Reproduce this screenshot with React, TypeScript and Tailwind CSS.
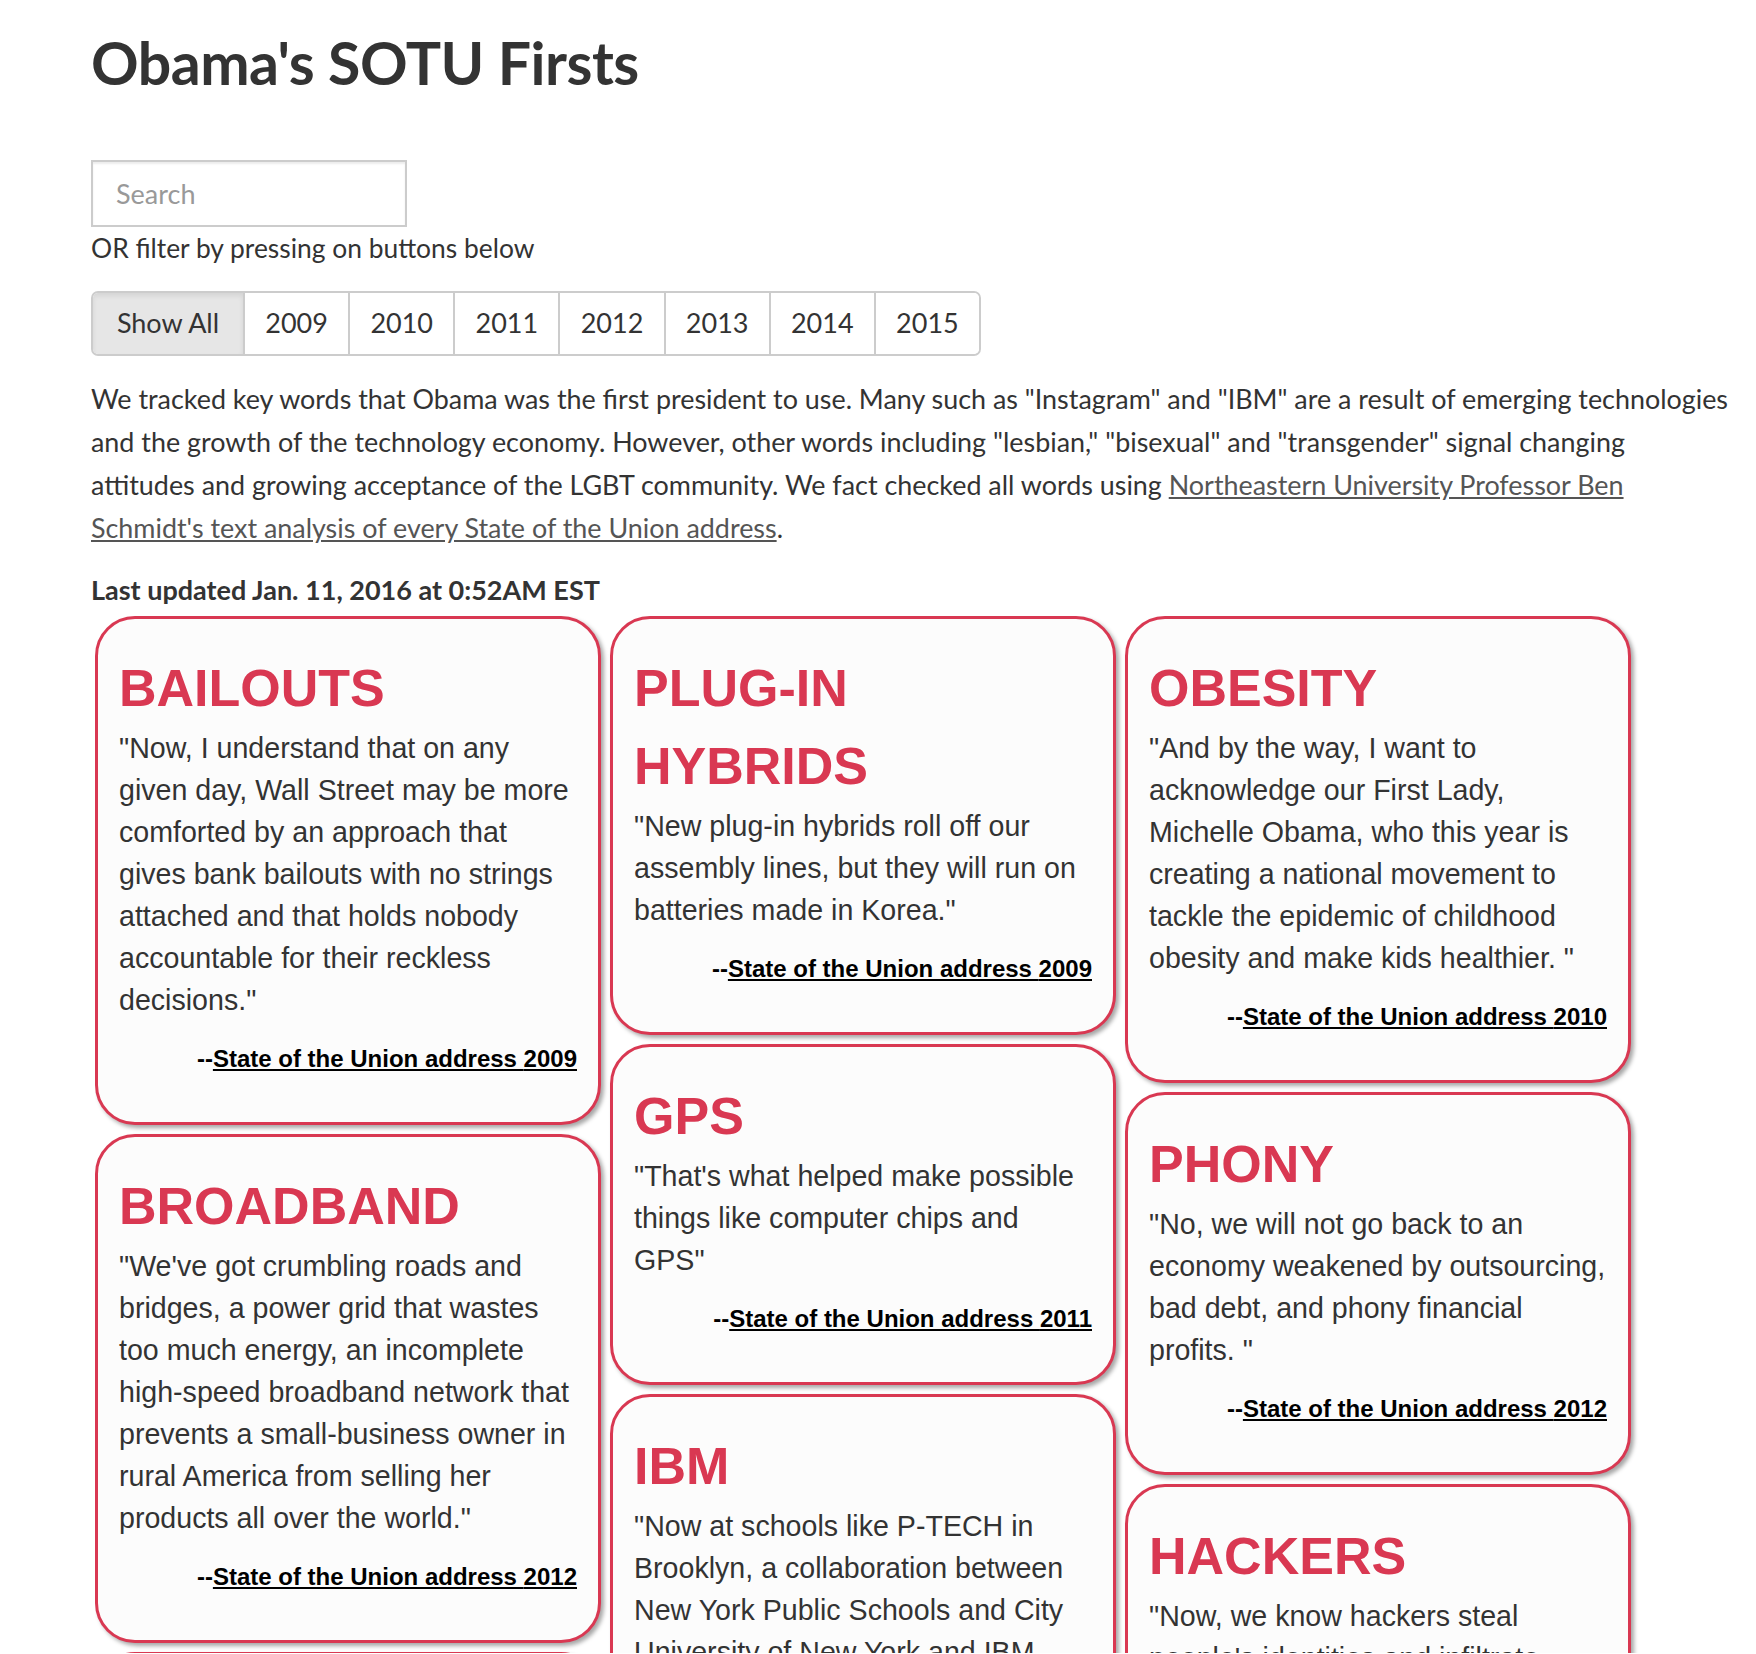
import React, { useState } from 'react';

interface First {
  word: string;
  quote: string;
  year: number;
}

const columns: First[][] = [
  [
    {
      word: 'BAILOUTS',
      quote:
        '"Now, I understand that on any given day, Wall Street may be more comforted by an approach that gives bank bailouts with no strings attached and that holds nobody accountable for their reckless decisions."',
      year: 2009,
    },
    {
      word: 'BROADBAND',
      quote:
        '"We\'ve got crumbling roads and bridges, a power grid that wastes too much energy, an incomplete high-speed broadband network that prevents a small-business owner in rural America from selling her products all over the world."',
      year: 2012,
    },
    {
      word: 'LESBIAN',
      quote:
        '"That\'s why we defend free speech, and advocate for political prisoners, and condemn the persecution of women, or religious minorities, or people who are lesbian, gay, bisexual or transgender."',
      year: 2015,
    },
  ],
  [
    {
      word: 'PLUG-IN HYBRIDS',
      quote: '"New plug-in hybrids roll off our assembly lines, but they will run on batteries made in Korea."',
      year: 2009,
    },
    {
      word: 'GPS',
      quote: '"That\'s what helped make possible things like computer chips and GPS"',
      year: 2011,
    },
    {
      word: 'IBM',
      quote:
        '"Now at schools like P-TECH in Brooklyn, a collaboration between New York Public Schools and City University of New York and IBM, students will graduate with a high school diploma and an associate\'s degree in computers or engineering."',
      year: 2013,
    },
  ],
  [
    {
      word: 'OBESITY',
      quote:
        '"And by the way, I want to acknowledge our First Lady, Michelle Obama, who this year is creating a national movement to tackle the epidemic of childhood obesity and make kids healthier. "',
      year: 2010,
    },
    {
      word: 'PHONY',
      quote: '"No, we will not go back to an economy weakened by outsourcing, bad debt, and phony financial profits. "',
      year: 2012,
    },
    {
      word: 'HACKERS',
      quote: '"Now, we know hackers steal people\'s identities and infiltrate private emails."',
      year: 2015,
    },
  ],
];

const years = ['Show All', '2009', '2010', '2011', '2012', '2013', '2014', '2015'];

const Card: React.FC<{ item: First }> = ({ item }) => (
  <div className="mb-[9px] rounded-[40px] border-[3px] border-[#d93852] bg-[#fcfcfc] px-[21px] pt-[30px] pb-[45px] shadow-[3px_3px_4px_rgba(0,0,0,0.35)] font-['Liberation_Sans',Arial,sans-serif]">
    <h2 className="text-[52px] font-bold leading-[78px] text-[#d93852]">{item.word}</h2>
    <p className="mb-[20px] text-[28.6px] leading-[42px] text-[#333]">{item.quote}</p>
    <p className="text-right text-[24px] font-bold leading-[36px] text-black">
      --<a href="#" className="underline">State of the Union address {item.year}</a>
    </p>
  </div>
);

export default function App() {
  const [active, setActive] = useState('Show All');
  const [query, setQuery] = useState('');

  return (
    <div className="min-h-screen bg-white px-[91px] pt-[32px] text-[#333] font-['Lato','Liberation_Sans',sans-serif]">
      <h1 className="text-[59px] font-bold leading-[62px] tracking-[-0.5px]">Obama's SOTU Firsts</h1>

      <input
        type="text"
        value={query}
        onChange={(e) => setQuery(e.target.value)}
        placeholder="Search"
        className="mt-[66px] block h-[67px] w-[316px] border-2 border-[#ccc] px-[23px] text-[27px] shadow-[inset_0_2px_2px_rgba(0,0,0,0.075)] placeholder:text-[#999] outline-none"
      />
      <p className="text-[26.4px] leading-[43px]">OR filter by pressing on buttons below</p>

      <div className="mt-[21px] flex w-[890px] overflow-hidden rounded-[7px] border-2 border-[#ccc]">
        {years.map((y, i) => (
          <button
            key={y}
            onClick={() => setActive(y)}
            className={`h-[61px] text-[27px] ${i === 0 ? 'w-[150px]' : 'flex-1 border-l-2 border-[#ccc]'} ${
              active === y ? 'bg-[#e6e6e6] shadow-[inset_0_3px_5px_rgba(0,0,0,0.08)]' : 'bg-white'
            }`}
          >
            {y}
          </button>
        ))}
      </div>

      <p className="mt-[21px] text-[26.9px] leading-[43px] whitespace-nowrap">
        We tracked key words that Obama was the first president to use. Many such as "Instagram" and "IBM" are a result of emerging technologies
        <br />
        and the growth of the technology economy. However, other words including "lesbian," "bisexual" and "transgender" signal changing
        <br />
        attitudes and growing acceptance of the LGBT community. We fact checked all words using{' '}
        <a href="#" className="text-[#555] underline">
          Northeastern University Professor Ben
          <br />
          Schmidt's text analysis of every State of the Union address
        </a>
        .
      </p>

      <p className="mt-[19px] text-[27px] font-bold leading-[43px]">Last updated Jan. 11, 2016 at 0:52AM EST</p>

      <div className="mt-[5px] ml-[4px] flex h-[1037px] items-start gap-[9px] overflow-hidden">
        {columns.map((col, ci) => (
          <div key={ci} className="flex w-[506px] shrink-0 flex-col">
            {col.map((item) => (
              <Card key={item.word} item={item} />
            ))}
          </div>
        ))}
      </div>
    </div>
  );
}
